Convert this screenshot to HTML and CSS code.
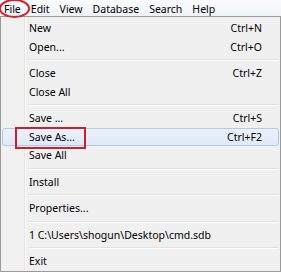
FILE: index.html
```html
<!DOCTYPE html>
<html>
<head>
<meta charset="utf-8">
<link rel="stylesheet" href="styles.css">
</head>
<body>
<div class="menubar">
  <span class="top top-file">File</span>
  <span class="top">Edit</span>
  <span class="top">View</span>
  <span class="top">Database</span>
  <span class="top">Search</span>
  <span class="top">Help</span>
</div>
<div class="menu">
  <div class="item"><span class="label">New</span><span class="key">Ctrl+N</span></div>
  <div class="item"><span class="label">Open...</span><span class="key">Ctrl+O</span></div>
  <div class="sep"></div>
  <div class="item"><span class="label">Close</span><span class="key">Ctrl+Z</span></div>
  <div class="item"><span class="label">Close All</span><span class="key"></span></div>
  <div class="sep"></div>
  <div class="item"><span class="label">Save ...</span><span class="key">Ctrl+S</span></div>
  <div class="item hot"><span class="label marked">Save As...</span><span class="key">Ctrl+F2</span></div>
  <div class="item"><span class="label">Save All</span><span class="key"></span></div>
  <div class="sep"></div>
  <div class="item"><span class="label">Install</span><span class="key"></span></div>
  <div class="sep"></div>
  <div class="item"><span class="label">Properties...</span><span class="key"></span></div>
  <div class="sep"></div>
  <div class="item"><span class="label">1 C:\Users\shogun\Desktop\cmd.sdb</span><span class="key"></span></div>
  <div class="sep"></div>
  <div class="item"><span class="label">Exit</span><span class="key"></span></div>
</div>
</body>
</html>
```
FILE: styles.css
```css
html, body {
  margin: 0;
  padding: 0;
  background: #ffffff;
  font-family: "Noto Sans", "Open Sans", sans-serif;
  font-size: 10.5px;
  color: #000000;
}

.menubar {
  display: flex;
  height: 16px;
  align-items: center;
  padding-left: 4px;
  gap: 10px;
  background: linear-gradient(#fbfcfe, #eef2f7);
}

.top {
  position: relative;
  line-height: 16px;
  padding-top: 1px;
}

.top-file::after {
  content: "";
  position: absolute;
  left: -5px;
  top: -1px;
  width: 27px;
  height: 15px;
  border: 2px solid #d4202c;
  border-radius: 50%;
}

.menu {
  width: 277px;
  border: 1px solid #9a9a9a;
  background: #f0f0f0;
  padding: 2px 1px 0 1px;
  background-image: linear-gradient(to right, #f1f1f1 0, #f1f1f1 23px, #e2e3e3 23px, #e2e3e3 24px, #ffffff 24px, #ffffff 25px, #f0f0f0 25px);
}

.item {
  display: flex;
  align-items: center;
  height: 18.5px;
  padding-left: 26px;
  padding-right: 16px;
  box-sizing: border-box;
  border: 1px solid transparent;
  border-radius: 3px;
}

.item.hot {
  background: linear-gradient(#ebf2fb, #dfe9f6);
  border-color: #b3cbe8;
}

.label {
  flex: 1;
  position: relative;
}

.key {
  text-align: right;
}

.marked {
  flex: none;
  margin-right: auto;
}

.marked::after {
  content: "";
  position: absolute;
  left: -14px;
  right: -11px;
  top: -3px;
  bottom: -5px;
  border: 2px solid #cc1f2b;
}

.sep {
  height: 8px;
  margin-left: 27px;
  background: linear-gradient(#f0f0f0 0, #f0f0f0 3px, #e0e0e0 3px, #e0e0e0 4px, #ffffff 4px, #ffffff 5px, #f0f0f0 5px);
}
```
